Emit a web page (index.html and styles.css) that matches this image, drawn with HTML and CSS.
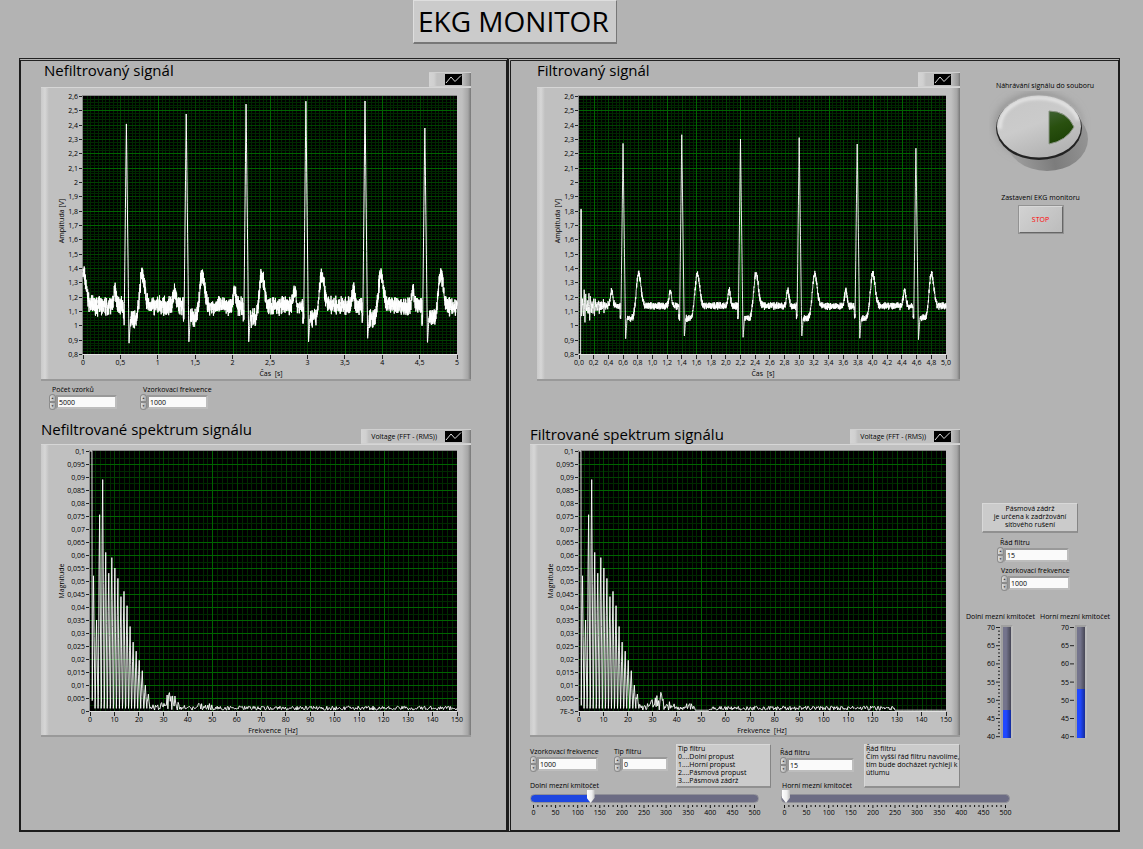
FILE: index.html
```html
<!DOCTYPE html>
<html lang="cs">
<head>
<meta charset="utf-8">
<title>EKG Monitor</title>
<link rel="stylesheet" href="styles.css">
</head>
<body>
<header class="top"><h1 class="title">EKG MONITOR</h1></header>
<main class="frame">
  <section class="panel panel-left">
    <div class="head head-first">
      <h2 class="h-small h-indent">Nefiltrovaný signál</h2>
      <div class="legend"><svg class="plot-icon" viewBox="0 0 17 11"><path d="M1 9L6 3L10 7.500L16 1.500"/></svg></div>
    </div>
    <figure class="chart"><svg id="raw-signal"></svg></figure>
    <div class="params">
      <div class="num">
        <label for="samples">Počet vzorků</label>
        <div class="num-row"><span class="spin"><button aria-label="Více">▲</button><button aria-label="Méně">▼</button></span><input id="samples" type="text" value="5000"></div>
      </div>
      <div class="num">
        <label for="rate">Vzorkovací frekvence</label>
        <div class="num-row"><span class="spin"><button aria-label="Více">▲</button><button aria-label="Méně">▼</button></span><input id="rate" type="text" value="1000"></div>
      </div>
    </div>
    <div class="head head-second">
      <h2 class="h-large">Nefiltrované spektrum signálu</h2>
      <div class="legend"><span>Voltage (FFT - (RMS))</span><svg class="plot-icon" viewBox="0 0 17 11"><path d="M1 9L6 3L10 7.500L16 1.500"/></svg></div>
    </div>
    <figure class="chart"><svg id="raw-spectrum"></svg></figure>
  </section>

  <section class="panel panel-right">
    <div class="upper">
      <div class="charts">
        <div class="head head-first">
          <h2 class="h-small h-right">Filtrovaný signál</h2>
          <div class="legend"><svg class="plot-icon" viewBox="0 0 17 11"><path d="M1 9L6 3L10 7.500L16 1.500"/></svg></div>
        </div>
        <figure class="chart chart-inset"><svg id="filtered-signal"></svg></figure>
        <div class="params"></div>
        <div class="head head-second">
          <h2 class="h-large h-low">Filtrované spektrum signálu</h2>
          <div class="legend"><span>Voltage (FFT - (RMS))</span><svg class="plot-icon" viewBox="0 0 17 11"><path d="M1 9L6 3L10 7.500L16 1.500"/></svg></div>
        </div>
        <figure class="chart"><svg id="filtered-spectrum"></svg></figure>
      </div>

      <aside class="side">
        <div class="record">
          <label for="record">Náhrávání signálu do souboru</label>
          <button id="record" class="record-btn">
            <svg viewBox="0 0 112 86">
              <defs>
                <linearGradient id="face" x1="0" y1="0" x2="0.500" y2="1"><stop offset="0" stop-color="#c6c6c6"/><stop offset="0.550" stop-color="#cbcbcb"/><stop offset="1" stop-color="#b4b4b4"/></linearGradient>
                <linearGradient id="led" x1="0" y1="0" x2="0.300" y2="1"><stop offset="0" stop-color="#3f6133"/><stop offset="0.500" stop-color="#29500f"/><stop offset="1" stop-color="#1d4206"/></linearGradient>
                <linearGradient id="shade" x1="0" y1="0.500" x2="1" y2="0.300"><stop offset="0" stop-color="#a0a0a0"/><stop offset="0.500" stop-color="#7c7c7c"/><stop offset="1" stop-color="#969696"/></linearGradient>
                <filter id="soft" x="-30%" y="-30%" width="160%" height="160%"><feGaussianBlur stdDeviation="4"/></filter>
                <filter id="soft2" x="-30%" y="-30%" width="160%" height="160%"><feGaussianBlur stdDeviation="1.500"/></filter>
              </defs>
              <ellipse cx="49" cy="34" rx="43" ry="32" fill="#8d8d8d" filter="url(#soft)"/>
              <ellipse cx="58" cy="48" rx="41" ry="32" fill="url(#shade)"/>
              <ellipse cx="50" cy="37" rx="43" ry="32" fill="#222"/>
              <ellipse cx="50" cy="35.500" rx="42" ry="31" fill="url(#face)"/>
              <path d="M11 38C10 20 27 7 49 7C69 7 85 16 89 29" fill="none" stroke="#e8e8e8" stroke-width="3" filter="url(#soft2)"/>
              <path d="M60 20Q78 20 85 36Q77 50 60 53Z" fill="url(#led)" stroke="#8a9484" stroke-width="1"/>
            </svg>
          </button>
        </div>
        <div class="stop">
          <label for="stop">Zastavení EKG monitoru</label>
          <button id="stop" class="stop-btn">STOP</button>
        </div>
        <p class="note note-center">Pásmová zádrž<br>je určena k zadržování<br>síťového rušení</p>
        <div class="num side-order">
          <label for="notch-order">Řád filtru</label>
          <div class="num-row"><span class="spin"><button aria-label="Více">▲</button><button aria-label="Méně">▼</button></span><input id="notch-order" type="text" value="15"></div>
        </div>
        <div class="num side-rate">
          <label for="notch-rate">Vzorkovací frekvence</label>
          <div class="num-row"><span class="spin"><button aria-label="Více">▲</button><button aria-label="Méně">▼</button></span><input id="notch-rate" type="text" value="1000"></div>
        </div>
        <div class="gauges">
          <div class="gauge">
            <label for="notch-low">Dolní mezní kmitočet</label>
            <div class="gauge-row"><svg class="vscale" data-minor="1" viewBox="0 0 20 116"></svg><input id="notch-low" class="vslide low" type="range" min="40" max="70" step="0.1" value="47.4"></div>
          </div>
          <div class="gauge">
            <label for="notch-high">Horní mezní kmitočet</label>
            <div class="gauge-row"><svg class="vscale" viewBox="0 0 20 116"></svg><input id="notch-high" class="vslide high" type="range" min="40" max="70" step="0.1" value="53.2"></div>
          </div>
        </div>
      </aside>
    </div>

    <div class="lower">
      <div class="filter filter-a">
        <div class="num">
          <label for="f-rate">Vzorkovací frekvence</label>
          <div class="num-row"><span class="spin"><button aria-label="Více">▲</button><button aria-label="Méně">▼</button></span><input id="f-rate" type="text" value="1000"></div>
        </div>
        <div class="num num-short">
          <label for="f-type">Tip filtru</label>
          <div class="num-row"><span class="spin"><button aria-label="Více">▲</button><button aria-label="Méně">▼</button></span><input id="f-type" type="text" value="0"></div>
        </div>
        <p class="note">Tip filtru<br>0....Dolní propust<br>1....Horní propust<br>2....Pásmová propust<br>3....Pásmová zádrž</p>
        <label class="slide-label" for="low">Dolní mezní kmitočet</label>
        <div class="slide"><input id="low" class="hslide low" type="range" min="0" max="500" value="127"><svg class="hscale" viewBox="0 0 236 20"></svg></div>
      </div>
      <div class="filter filter-b">
        <div class="num">
          <label for="f-order">Řád filtru</label>
          <div class="num-row"><span class="spin"><button aria-label="Více">▲</button><button aria-label="Méně">▼</button></span><input id="f-order" type="text" value="15"></div>
        </div>
        <p class="note">Řád filtru<br>Čím vyšší řád filtru navolíme,<br>tím bude docházet rychleji k<br>útlumu</p>
        <label class="slide-label" for="high">Horní mezní kmitočet</label>
        <div class="slide"><input id="high" class="hslide high" type="range" min="0" max="500" value="0"><svg class="hscale" viewBox="0 0 236 20"></svg></div>
      </div>
    </div>
  </section>
</main>
<script src="script.js"></script>
</body>
</html>
```

FILE: styles.css
```css
* { box-sizing: border-box; }
body {
  margin: 0;
  background: #b3b3b3;
  color: #000;
  font-family: "Open Sans", "Noto Sans", sans-serif;
  font-size: 7px;
  line-height: 8px;
}
h1, h2, p, figure { margin: 0; font-weight: 400; }
button, input { font: inherit; color: inherit; margin: 0; }
svg { display: block; }
svg text { font-family: "Open Sans", "Noto Sans", sans-serif; font-size: 7px; fill: #000; }

.top { display: flex; padding-left: 413px; height: 58px; align-items: flex-start; }
.title {
  padding: 0 7px 0 4px;
  height: 44px;
  font-size: 28px;
  line-height: 40px;
  white-space: nowrap;
  background: #cbcbcb;
  border: 1px solid #dedede;
  border-right-color: #777;
  border-bottom: 2px solid #777;
}
.frame { display: grid; grid-template-columns: 489fr 612fr; margin: 0 23px 17px 19px; }
.panel { border: 2px solid #1c1c1c; border-top: 3px double #222; min-height: 774px; }
.panel-left { padding: 0 35px 0 20px; }
.panel-right { padding-left: 19px; border-left: 3px double #1c1c1c; }

.head { display: flex; justify-content: space-between; align-items: flex-end; height: 26px; }
.head-second { margin-top: 10px; }
.h-small, .h-large { font-size: 15px; line-height: 20px; align-self: flex-start; }
.h-small { line-height: 19px; }
.h-indent { padding-left: 3px; }
.h-right { padding-left: 7px; }
.h-large { padding-top: 1px; }
.h-low { padding-top: 6px; }
.legend {
  display: flex;
  align-items: center;
  gap: 8px;
  height: 15px;
  padding: 0 9px 0 10px;
  white-space: nowrap;
  border-top: 1px solid #d0d0d0;
  border-bottom: 1px solid #cfcfcf;
  background: linear-gradient(90deg, #d4d4d4 0, #d0d0d0 5px, #c0c0c0 8px, #c0c0c0 calc(100% - 9px), #999 calc(100% - 2px), #777 100%);
}
.head-first .legend { padding-left: 16px; }
.plot-icon { width: 17px; height: 11px; background: #000; }
.plot-icon path { fill: none; stroke: #ddd; stroke-width: 1; }
.chart {
  border-top: 1px solid #d6d6d6;
  border-bottom: 2px solid #999;
  background: linear-gradient(90deg, #cacaca 0, #d6d6d6 4px, #c0c0c0 8px, #c0c0c0 calc(100% - 9px), #a6a6a6 calc(100% - 3px), #777 100%);
}
.chart-inset { margin-left: 7px; }
.chart svg { width: 100%; height: auto; }

.params { display: flex; gap: 23px; height: 27px; padding: 5px 0 0 8px; }
.num { display: flex; flex-direction: column; gap: 1px; width: 68px; }
.num label { padding-left: 3px; white-space: nowrap; }
.num-row { display: flex; align-items: center; height: 14px; }
.spin { display: flex; flex-direction: column; width: 7px; height: 16px; flex: none; }
.spin button {
  flex: 1;
  padding: 0;
  border: 1px solid #8b8b8b;
  border-radius: 4px 4px 1px 1px;
  background: linear-gradient(90deg, #ddd, #aaa);
  font-size: 3px;
  line-height: 4px;
  color: #333;
}
.spin button + button { border-radius: 1px 1px 4px 4px; }
.num input {
  flex: 1;
  min-width: 0;
  height: 14px;
  padding: 0 0 0 1px;
  border: 2px solid #999;
  border-right-color: #bdbdbd;
  border-bottom-color: #bdbdbd;
  border-radius: 0;
  background: #fafafa;
}

.upper { display: grid; grid-template-columns: 430fr 158fr; }
.side { display: flex; flex-direction: column; padding: 21px 8px 0 6px; }
.record, .stop { display: flex; flex-direction: column; align-items: center; padding-left: 14px; }
.record-btn { width: 112px; height: 86px; padding: 0; border: 0; background: none; margin-top: 1px; }
.stop { margin-top: 17px; gap: 3px; padding-left: 5px; }
.stop-btn {
  width: 46px;
  height: 29px;
  padding: 0;
  color: #f00;
  background: linear-gradient(135deg, #d2d2d2, #bcbcbc);
  border: 2px solid #d8d8d8;
  border-right-color: #666;
  border-bottom-color: #666;
  outline: 1px solid #929292;
  outline-offset: -1px;
}
.note {
  padding: 0 0 1px 1px;
  background: #cbcbcb;
  border: 1px solid #d8d8d8;
  border-right-color: #858585;
  border-bottom: 2px solid #909090;
  white-space: nowrap;
}
.note-center { text-align: center; width: 96px; height: 30px; margin: 269px 0 0 16px; padding: 1px 0; }
.side-order { margin: 6px 0 0 31px; width: 72px; }
.side-rate { margin: 5px 0 0 35px; width: 69px; }
.side-rate label { padding-left: 0; }
.gauges { display: flex; justify-content: space-between; margin-top: 23px; }
.gauge { width: 70px; white-space: nowrap; }
.gauge-row { display: flex; padding-left: 15px; margin-top: 3px; }
.vscale { width: 20px; height: 116px; }
.vslide {
  appearance: none;
  writing-mode: vertical-lr;
  direction: rtl;
  width: 12px;
  height: 113px;
  margin-top: 1px;
  border: 2px solid #a0a0a0;
  border-right-color: #bdbdbd;
  border-bottom: 0;
}
.vslide::-webkit-slider-thumb { appearance: none; width: 8px; height: 1px; background: transparent; }
.vslide.low { background: linear-gradient(90deg, transparent 40%, #0006), linear-gradient(0deg, #2048ff 25%, #74748c 25%); }
.vslide.high { background: linear-gradient(90deg, transparent 40%, #0006), linear-gradient(0deg, #2048ff 44%, #74748c 44%); }

.lower { display: flex; gap: 9px; padding-top: 4px; }
.filter { display: grid; grid-template-rows: 36px 12px auto; }
.filter-a { grid-template-columns: 84px 62px 95px; width: 241px; }
.filter-b { grid-template-columns: 84px 96px 1fr; width: 236px; }
.filter .num { padding-top: 4px; width: 68px; }
.filter .num label { padding-left: 0; }
.filter-b .num { padding-top: 5px; width: 74px; }
.filter .num-short { width: 54px; }
.filter .note { grid-row: 1 / 3; height: 44px; align-self: start; }
.filter-a .note { grid-column: 3; }
.filter-b .note { grid-column: 2; }
.slide-label { grid-row: 2; grid-column: 1 / 3; padding-top: 2px; }
.filter-b .slide-label { grid-column: 1; white-space: nowrap; padding-left: 2px; }
.slide { grid-row: 3; grid-column: 1 / -1; display: flex; flex-direction: column; }
.hslide { appearance: none; width: 229px; height: 13px; background: none; }
.hslide::-webkit-slider-runnable-track {
  height: 9px;
  border-radius: 5px;
  border: 1px solid #909098;
}
.hslide.low::-webkit-slider-runnable-track { background: linear-gradient(90deg, #1e46e0 26%, #6c6c84 26%); }
.hslide.high::-webkit-slider-runnable-track { background: #6c6c84; }
.hslide::-webkit-slider-thumb {
  appearance: none;
  width: 8px;
  height: 13px;
  margin-top: -5px;
  background: linear-gradient(90deg, #fff, #eee 60%, #bbb);
  clip-path: polygon(0 0, 100% 0, 100% 60%, 50% 100%, 0 60%);
}
.hscale { width: 236px; height: 20px; }
.filter-b .slide { padding-left: 1px; }
```

FILE: script.js
```js
const NS = "http://www.w3.org/2000/svg";
function add(parent, tag, attrs, text) {
  const e = document.createElementNS(NS, tag);
  for (const k in attrs) e.setAttribute(k, attrs[k]);
  if (text !== undefined) e.textContent = text;
  parent.appendChild(e);
  return e;
}
let seed = 7;
function rnd() { seed = (seed * 16807) % 2147483647; return seed / 2147483647; }
const comma = (v, d) => (d === undefined ? String(+v.toFixed(4)) : v.toFixed(d)).replace(".", ",");

function chart(id, o) {
  const s = document.getElementById(id);
  s.setAttribute("viewBox", `0 0 ${o.w} ${o.h}`);
  const X = v => o.px + (v - o.x0) / (o.x1 - o.x0) * o.pw;
  const Y = v => o.py + (o.y1 - v) / (o.y1 - o.y0) * o.ph;
  const snap = v => Math.round(v) + 0.5;
  add(s, "rect", { x: o.px - 1, y: o.py - 1, width: o.pw + 1, height: o.ph + 1, fill: "#8a8a8a" });
  add(s, "rect", { x: o.px, y: o.py, width: o.pw, height: o.ph, fill: "#000" });
  let minor = "", dim = "", lit = "", ticks = "";
  const vline = x => `M${snap(x)} ${o.py}V${o.py + o.ph}`;
  const hline = y => `M${o.px} ${snap(y)}H${o.px + o.pw}`;
  for (let i = 1; o.x0 + i * o.xm < o.x1 - 1e-9; i++) minor += vline(X(o.x0 + i * o.xm));
  for (let i = 1; o.y0 + i * o.ym < o.y1 - 1e-9; i++) minor += hline(Y(o.y0 + i * o.ym));
  const nx = Math.round((o.x1 - o.x0) / o.xs), ny = Math.round((o.y1 - o.y0) / o.ys);
  for (let i = 0; i <= nx; i++) {
    const v = o.x0 + i * o.xs, x = X(v);
    if (i && i < nx) o.litX.includes(i) ? lit += vline(x) : dim += vline(x);
    ticks += `M${snap(x - 0.5)} ${o.py + o.ph + 1}v4`;
    add(s, "text", { x, y: o.py + o.ph + 11, "text-anchor": "middle" }, comma(v, o.xd));
  }
  for (let i = 0; i <= ny; i++) {
    const v = o.y0 + i * o.ys, y = Y(v);
    if (i && i < ny) o.litY.includes(i) ? lit += hline(y) : dim += hline(y);
    ticks += `M${o.px - 4} ${snap(y)}h3`;
    add(s, "text", { x: o.px - 5, y: y + 3, "text-anchor": "end" }, i === 0 && o.low ? o.low : comma(v));
  }
  add(s, "path", { d: minor, stroke: "#002900", fill: "none" });
  add(s, "path", { d: dim, stroke: "#004200", fill: "none" });
  add(s, "path", { d: lit, stroke: "#006400", fill: "none" });
  add(s, "path", { d: ticks, stroke: "#222", fill: "none" });
  add(s, "path", { d: `M${o.px} ${o.py + o.ph + 0.5}H${o.px + o.pw}`, stroke: "#e4e4e4" });
  const pts = o.data.map(p => X(p[0]).toFixed(2) + "," + Math.max(o.py, Math.min(o.py + o.ph, Y(p[1]))).toFixed(1)).join(" ");
  add(s, "polyline", { points: pts, fill: "none", stroke: "#fff", "stroke-width": o.sw, "stroke-linejoin": "bevel" });
  add(s, "text", { x: o.lx, y: o.py + o.ph + 22, "text-anchor": "middle", style: "white-space: pre" }, o.xl);
  add(s, "text", { transform: `translate(${o.ylx} ${o.yly}) rotate(-90)`, "text-anchor": "middle" }, o.yl);
}

function ecg(beats, noise, start) {
  const out = [];
  const count = 3200;
  const lerp = (a, b, t) => a + (b - a) * t;
  for (let i = 0; i <= count; i++) {
    const t = i * 5 / count;
    let v = 1.135, n = noise;
    for (const [r] of beats) {
      const d = t - r;
      v += 0.11 * Math.exp(-(((d + 0.155) / 0.024) ** 2));
      v += 0.225 * Math.exp(-(((d - 0.212) / 0.044) ** 2));
      if (d > 0.05 && d < 0.2) v -= 0.085 * Math.min(1, (0.2 - d) / 0.06);
    }
    for (const [r, top, bottom] of beats) {
      const d = t - r;
      if (d >= -0.04 && d < -0.028) { v = 1.06; }
      if (d >= -0.028 && d < 0) { v = lerp(1.1, top, (d + 0.028) / 0.028); n = 0; }
      if (d >= 0 && d < 0.035) { v = lerp(top, bottom, d / 0.035); n = 0; }
      if (d >= 0.035 && d < 0.055) { v = lerp(bottom, 1.05, (d - 0.035) / 0.02); n = 0; }
    }
    v += n * (rnd() + rnd() - 1);
    out.push([t, start(t, v)]);
  }
  return out;
}
const raw = ecg([[0.58, 2.42, 0.87], [1.38, 2.49, 0.88], [2.18, 2.56, 0.88], [2.98, 2.58, 0.88], [3.77, 2.58, 0.9], [4.57, 2.39, 0.87]],
  0.075, (t, v) => v + 0.24 * Math.exp(-((t / 0.055) ** 2)));
const filtered = ecg([[0.6, 2.27, 0.9], [1.4, 2.33, 0.92], [2.2, 2.3, 0.91], [3, 2.31, 0.92], [3.79, 2.29, 0.91], [4.59, 2.26, 0.9]],
  0.03, (t, v) => t < 0.022 ? 0.8 : t < 0.034 ? 1.81 : v + (0.2 * Math.exp(-t / 0.09) + 0.04 * Math.exp(-((t / 0.4) ** 4))) * Math.sin(t * 290) * (0.6 + 0.4 * Math.sin(t * 97)));

function spectrum(cut) {
  const p = [[0, 0.1], [0.8, 0.1], [0.9, 0.004]];
  const peaks = [0.052, 0.035, 0.0755, 0.089, 0.061, 0.053, 0.059, 0.055, 0.051, 0.044, 0.046, 0.0405, 0.0325, 0.0265, 0.023, 0.0195, 0.0155, 0.01, 0.0065];
  peaks.forEach((a, i) => {
    const f = 1.45 + i * 1.245;
    p.push([f - 0.5, 0.002 + rnd() * 0.004], [f - 0.25, a * 0.72], [f, a], [f + 0.25, a * 0.55], [f + 0.6, 0.001]);
  });
  for (let f = 24.8; f <= 150; f += 0.32) {
    let h = 0.0016;
    if (f < 39) h = 0.0024 + 0.0046 * Math.exp(-(((f - 33) / 3.2) ** 2));
    if (f > 44 && f < 50) h = 0.0026;
    if (cut && ((f > 47.5 && f < 53) || f > 129)) h = 0;
    p.push([f, 0.0003 + h * rnd()]);
  }
  return p;
}
const sLit = [1, 2, 3, 4, 5, 6, 7, 8, 9, 10, 11, 12, 13, 14, 15, 17, 19];
const signal = { y0: 0.8, y1: 2.6, x0: 0, x1: 5, ys: 0.1, ym: 0.02, xm: 0.05, h: 291, py: 8, ph: 258, litY: [3, 4, 9, 10, 13, 14, 17], xl: "Čas  [s]", yl: "Amplituda [V]", yly: 133 };
chart("raw-signal", { ...signal, w: 430, px: 42, pw: 374, xs: 0.5, litX: [2, 4, 5, 7, 8], lx: 230, ylx: 23, data: raw, sw: 1 });
chart("filtered-signal", { ...signal, w: 423, px: 42, pw: 367, xs: 0.2, xd: 1, litX: [1, 6, 8, 11, 17, 20, 22], lx: 226, ylx: 23, data: filtered, sw: 0.9 });
const spec = { y0: 0, y1: 0.1, x0: 0, x1: 150, xs: 10, ys: 0.005, xm: 2, ym: 0.0025, w: 430, h: 290, py: 6, ph: 260, px: 49, pw: 367, litY: sLit, xl: "Frekvence  [Hz]", yl: "Magnitude", ylx: 23, yly: 136, lx: 232, sw: 0.9 };
chart("raw-spectrum", { ...spec, litX: [5, 9, 12], data: spectrum(false) });
chart("filtered-spectrum", { ...spec, litX: [2, 5, 12], low: "7E-5", data: spectrum(true) });

document.querySelectorAll(".hscale").forEach(s => {
  let d = "";
  for (let i = 0; i <= 50; i++) d += `M${(3.5 + i * 4.42).toFixed(1)} 0v${i % 5 ? 2 : 3}`;
  add(s, "path", { d, stroke: "#111", "stroke-width": 1 });
  for (let i = 0; i <= 10; i++) add(s, "text", { x: 3.5 + i * 22.1, y: 10, "text-anchor": "middle" }, i * 50);
});
document.querySelectorAll(".vscale").forEach(s => {
  let d = "";
  for (let i = 0; i <= 6; i++) {
    const y = 3.5 + i * 18.2;
    d += `M15 ${y}h4`;
    add(s, "text", { x: 14, y: y + 2.5, "text-anchor": "end" }, 70 - i * 5);
    if (s.dataset.minor && i < 6) for (let k = 1; k < 5; k++) d += `M17 ${y + k * 3.64}h2`;
  }
  add(s, "path", { d, stroke: "#222", "stroke-width": 1 });
});
```
